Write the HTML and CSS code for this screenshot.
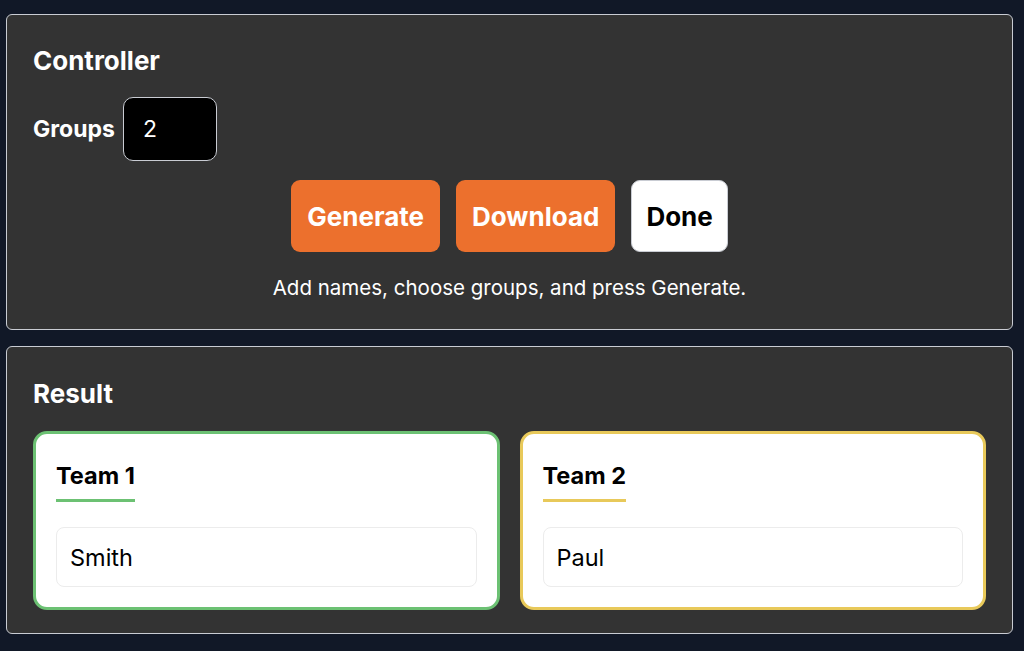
FILE: index.html
```html
<!DOCTYPE html>
<html lang="en">
<head>
    <meta charset="UTF-8">
    <meta name="viewport" content="width=device-width, initial-scale=1.0">
    <title>Team Generator</title>
    <link rel="stylesheet" href="styles.css">
</head>
<body>
    <section class="panel controller">
        <h2>Controller</h2>
        <div class="groups-row">
            <label for="groups">Groups</label>
            <input id="groups" class="groups-input" type="number" value="2">
        </div>
        <div class="actions">
            <button class="btn btn-orange">Generate</button>
            <button class="btn btn-orange">Download</button>
            <button class="btn btn-white">Done</button>
        </div>
        <p class="hint">Add names, choose groups, and press Generate.</p>
    </section>

    <section class="panel result">
        <h2>Result</h2>
        <div class="teams">
            <div class="team team-green">
                <h3>Team 1</h3>
                <div class="member">Smith</div>
            </div>
            <div class="team team-yellow">
                <h3>Team 2</h3>
                <div class="member">Paul</div>
            </div>
        </div>
    </section>
</body>
</html>
```

FILE: styles.css
```css
body {
    font-family: Inter, "Helvetica Neue", Arial, sans-serif;
    margin: 0;
    padding: 14px 11px 0 6px;
    background: #111827;
    color: white;
}

.panel {
    background: #333333;
    border: 1.5px solid #c9ccd3;
    border-radius: 6px;
    padding: 0 26px;
}

.panel h2 {
    font-size: 26px;
    font-weight: 700;
    margin: 0;
}

.controller {
    padding-top: 30px;
    padding-bottom: 29px;
}

.groups-row {
    display: flex;
    align-items: center;
    gap: 8px;
    margin-top: 21px;
}

.groups-row label {
    font-size: 23px;
    font-weight: 700;
}

.groups-input {
    width: 94px;
    height: 64px;
    box-sizing: border-box;
    background: black;
    color: white;
    border: 1.5px solid #c9ccd3;
    border-radius: 10px;
    padding: 0 19px;
    font-family: inherit;
    font-size: 23px;
    appearance: textfield;
    -moz-appearance: textfield;
}

.groups-input::-webkit-inner-spin-button,
.groups-input::-webkit-outer-spin-button {
    -webkit-appearance: none;
    margin: 0;
}

.actions {
    display: flex;
    justify-content: center;
    gap: 16px;
    margin-top: 19px;
}

.btn {
    height: 72px;
    padding: 0 16px;
    border: none;
    border-radius: 9px;
    font-family: inherit;
    font-size: 26px;
    font-weight: 700;
    cursor: pointer;
}

.btn-orange {
    background: #ec702d;
    color: white;
}

.btn-white {
    background: white;
    color: black;
    border: 1.5px solid #c9ccd3;
    padding: 0 14px;
}

.hint {
    text-align: center;
    font-size: 20.5px;
    margin: 23px 0 0;
}

.result {
    margin-top: 16px;
    padding-top: 31px;
    padding-bottom: 23px;
}

.teams {
    display: grid;
    grid-template-columns: 1fr 1fr;
    gap: 20px;
    margin-top: 22px;
}

.team {
    background: white;
    color: black;
    border: 3px solid;
    border-radius: 14px;
    padding: 27px 20px 20px;
}

.team-green {
    border-color: #6cc173;
}

.team-yellow {
    border-color: #e8c95a;
}

.team h3 {
    display: inline-block;
    font-size: 23.5px;
    font-weight: 700;
    margin: 0;
    padding-bottom: 9px;
    border-bottom: 3px solid;
}

.team-green h3 {
    border-bottom-color: #6cc173;
}

.team-yellow h3 {
    border-bottom-color: #e8c95a;
}

.member {
    margin-top: 25px;
    border: 1px solid #ececec;
    border-radius: 8px;
    padding: 0 13px;
    height: 58px;
    display: flex;
    align-items: center;
    font-size: 23.5px;
}
```
